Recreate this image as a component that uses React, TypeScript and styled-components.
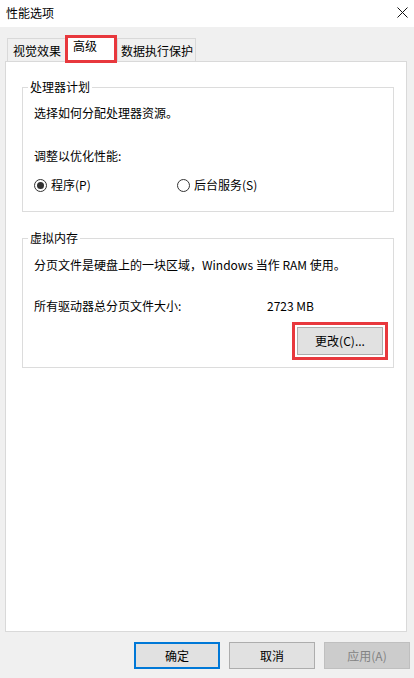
import React from "react";
import styled, { createGlobalStyle } from "styled-components";

const GlobalStyle = createGlobalStyle`
  html, body { margin: 0; padding: 0; background: #f0f0f0; }
  body {
    font-family: "Microsoft YaHei", "Noto Sans CJK SC", "Noto Sans", sans-serif;
    font-size: 12px;
    color: #000;
  }
  * { box-sizing: border-box; }
`;

const Window = styled.div`
  width: 414px;
  height: 678px;
  display: flex;
  flex-direction: column;
  background: #f0f0f0;
  overflow: hidden;
`;

const TitleBar = styled.div`
  height: 27px;
  flex: none;
  background: #fff;
  display: flex;
  align-items: center;
  justify-content: space-between;
  padding: 0 6px 2px 6px;
  font-size: 12px;
  line-height: 16px;
`;

const CloseIcon = styled.svg`
  width: 11px;
  height: 11px;
  display: block;
`;

const TabStrip = styled.div`
  display: flex;
  align-items: flex-end;
  height: 26px;
  margin-top: 8px;
  padding-left: 7px;
  flex: none;
`;

const Tab = styled.div<{ $selected?: boolean; $w: number; $pl: number }>`
  width: ${(p) => p.$w}px;
  height: ${(p) => (p.$selected ? 28 : 23)}px;
  margin-bottom: ${(p) => (p.$selected ? -2 : 0)}px;
  position: relative;
  z-index: ${(p) => (p.$selected ? 2 : 1)};
  background: ${(p) => (p.$selected ? "#fff" : "#f0f0f0")};
  border: ${(p) => (p.$selected ? "3px solid #e8383d" : "1px solid #d9d9d9")};
  border-bottom: ${(p) => (p.$selected ? "3px solid #e8383d" : "none")};
  border-left: ${(p) => (p.$selected ? "3px solid #e8383d" : "1px solid #d9d9d9")};
  border-right: ${(p) => (p.$selected ? "3px solid #e8383d" : "none")};
  padding-left: ${(p) => p.$pl}px;
  padding-top: ${(p) => (p.$selected ? 0 : 2)}px;
  display: flex;
  align-items: ${(p) => (p.$selected ? "flex-start" : "center")};
  line-height: 16px;
  white-space: nowrap;
  &:last-child {
    border-right: 1px solid #d9d9d9;
  }
`;

const Panel = styled.div`
  margin-left: 5px;
  width: 402px;
  height: 571px;
  flex: none;
  background: #fff;
  border: 1px solid #d9d9d9;
  padding: 17px 12px 0 16px;
  position: relative;
  z-index: 1;
`;

const Group = styled.fieldset<{ $mt?: number }>`
  margin: ${(p) => p.$mt ?? 0}px 0 0 0;
  padding: 0;
  min-width: 0;
  border: 1px solid #dcdcdc;
`;

const Legend = styled.legend`
  margin-left: 5px;
  padding: 0 2px;
  line-height: 16px;
  font-size: 12px;
`;

const GroupBody = styled.div<{ $pad: string }>`
  display: flex;
  flex-direction: column;
  padding: ${(p) => p.$pad};
`;

const Line = styled.div<{ $mt?: number }>`
  margin-top: ${(p) => p.$mt ?? 0}px;
  line-height: 16px;
  height: 16px;
  white-space: nowrap;
`;

const RadioRow = styled.div<{ $mt?: number }>`
  margin-top: ${(p) => p.$mt ?? 0}px;
  display: grid;
  grid-template-columns: 143px auto;
  height: 16px;
`;

const RadioItem = styled.label`
  display: flex;
  align-items: center;
  gap: 4px;
  line-height: 16px;
  white-space: nowrap;
`;

const RadioCircle = styled.span<{ $checked?: boolean }>`
  width: 13px;
  height: 13px;
  border-radius: 50%;
  border: 1px solid #333;
  background: #fff;
  display: inline-flex;
  align-items: center;
  justify-content: center;
  flex: none;
  &::after {
    content: "";
    width: 7px;
    height: 7px;
    border-radius: 50%;
    background: ${(p) => (p.$checked ? "#333" : "transparent")};
  }
`;

const ValueRow = styled.div<{ $mt?: number }>`
  margin-top: ${(p) => p.$mt ?? 0}px;
  display: grid;
  grid-template-columns: 233px auto;
  line-height: 16px;
  height: 16px;
  white-space: nowrap;
`;

const ButtonRow = styled.div<{ $mt?: number }>`
  margin-top: ${(p) => p.$mt ?? 0}px;
  display: flex;
  justify-content: flex-end;
`;

const Highlight = styled.div`
  display: inline-flex;
  border: 3px solid #e8383d;
  padding: 2px;
`;

type Variant = "normal" | "default" | "disabled";

const Button = styled.button<{ $variant?: Variant; $w?: number; $h?: number }>`
  width: ${(p) => p.$w ?? 86}px;
  height: ${(p) => p.$h ?? 27}px;
  font-family: inherit;
  font-size: 12px;
  line-height: 16px;
  padding: 0;
  margin: 0;
  background: ${(p) => (p.$variant === "disabled" ? "#cccccc" : "#e1e1e1")};
  color: ${(p) => (p.$variant === "disabled" ? "#838383" : "#000")};
  border: ${(p) =>
    p.$variant === "default"
      ? "2px solid #0078d7"
      : p.$variant === "disabled"
      ? "1px solid #bfbfbf"
      : "1px solid #adadad"};
  display: flex;
  align-items: center;
  justify-content: center;
`;

const Footer = styled.div`
  flex: 1;
  display: flex;
  justify-content: flex-end;
  align-items: flex-start;
  padding: 10px 4px 0 0;
  gap: 9px;
`;

export default function App() {
  return (
    <>
      <GlobalStyle />
      <Window>
        <TitleBar>
          <span>性能选项</span>
          <CloseIcon viewBox="0 0 11 11">
            <path d="M0.5 0.5 L10.5 10.5 M10.5 0.5 L0.5 10.5" stroke="#111" strokeWidth="1" fill="none" />
          </CloseIcon>
        </TitleBar>
        <TabStrip>
          <Tab $w={58} $pl={5}>视觉效果</Tab>
          <Tab $selected $w={52} $pl={5}>高级</Tab>
          <Tab $w={79} $pl={3}>数据执行保护</Tab>
        </TabStrip>
        <Panel>
          <Group>
            <Legend>处理器计划</Legend>
            <GroupBody $pad="10px 10px 18px 11px">
              <Line>选择如何分配处理器资源。</Line>
              <Line $mt={27}>调整以优化性能:</Line>
              <RadioRow $mt={13}>
                <RadioItem>
                  <RadioCircle $checked />
                  程序(P)
                </RadioItem>
                <RadioItem>
                  <RadioCircle />
                  后台服务(S)
                </RadioItem>
              </RadioRow>
            </GroupBody>
          </Group>
          <Group $mt={18}>
            <Legend>虚拟内存</Legend>
            <GroupBody $pad="11px 5px 7px 11px">
              <Line>分页文件是硬盘上的一块区域，Windows 当作 RAM 使用。</Line>
              <ValueRow $mt={25}>
                <span>所有驱动器总分页文件大小:</span>
                <span>2723 MB</span>
              </ValueRow>
              <ButtonRow $mt={8}>
                <Highlight>
                  <Button $w={86} $h={28}>更改(C)...</Button>
                </Highlight>
              </ButtonRow>
            </GroupBody>
          </Group>
        </Panel>
        <Footer>
          <Button $variant="default" $w={86}>确定</Button>
          <Button $w={86}>取消</Button>
          <Button $variant="disabled" $w={86}>应用(A)</Button>
        </Footer>
      </Window>
    </>
  );
}
